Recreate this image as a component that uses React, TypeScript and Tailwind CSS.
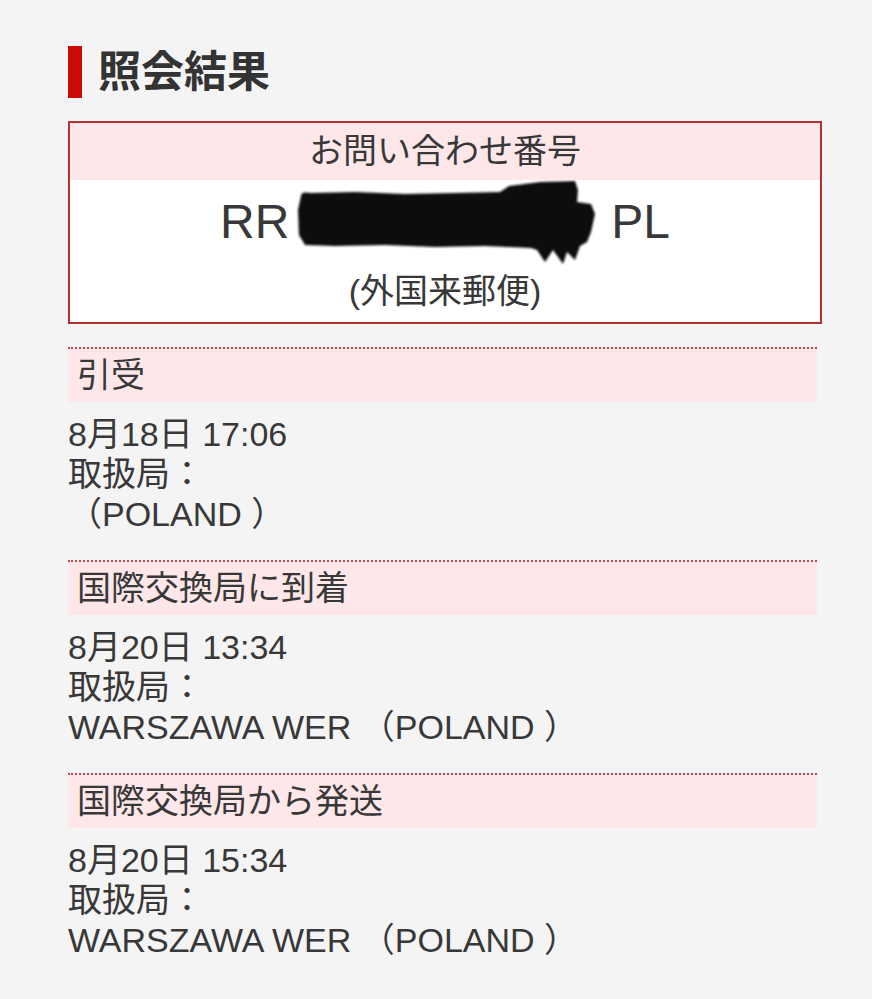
const font = "font-['Liberation_Sans','Noto_Sans_CJK_JP',sans-serif]";

type Event = {
  status: string;
  date: string;
  office: string;
};

const events: Event[] = [
  { status: '引受', date: '8月18日 17:06', office: '（POLAND ）' },
  { status: '国際交換局に到着', date: '8月20日 13:34', office: 'WARSZAWA WER （POLAND ）' },
  { status: '国際交換局から発送', date: '8月20日 15:34', office: 'WARSZAWA WER （POLAND ）' },
];

function Redaction() {
  return (
    <svg width="310" height="85" viewBox="0 0 310 85" className="mx-[6px] shrink-0">
      <defs>
        <filter id="soft" x="-5%" y="-5%" width="110%" height="110%">
          <feGaussianBlur stdDeviation="1.2" />
        </filter>
      </defs>
      <path
        d="M6,16 C6,12 10,12 16,13 L60,12 L110,14 L160,13 L205,12 L214,6 L245,2 L280,1 L283,10 L282,22 L296,24 L300,34 L296,52 L292,62 L285,66 L280,80 L272,72 L268,84 L258,70 L250,82 L242,70 L236,68 L190,66 L140,67 L90,65 L40,66 L10,65 L4,55 L3,30 Z"
        fill="#111"
        filter="url(#soft)"
      />
    </svg>
  );
}

export default function App() {
  return (
    <div className={`min-h-screen bg-[#f4f4f4] text-[#383838] ${font}`}>
      <div className="pl-[68px] pt-[46px]">
        {/* Title */}
        <div className="flex items-center gap-[16px]">
          <div className="h-[52px] w-[14px] bg-[#cc0a0a]" />
          <h1 className="text-[43px] font-bold leading-[52px] text-[#333]">照会結果</h1>
        </div>

        {/* Tracking number box */}
        <div className="mt-[23px] w-[754px] border-2 border-[#b23131] bg-white">
          <div className="flex h-[57px] items-center justify-center bg-[#fde7e8] text-[34px]">
            お問い合わせ番号
          </div>
          <div className="pt-[12px] pb-[11px]">
            <div className="flex h-[60px] items-center justify-center text-[48px] leading-[60px]">
              <span>RR</span>
              <Redaction />
              <span>PL</span>
            </div>
            <div className="mt-[19px] text-center text-[34px] leading-[40px]">(外国来郵便)</div>
          </div>
        </div>

        {/* History */}
        <div className="mt-[23px] w-[749px]">
          {events.map((e) => (
            <div key={e.date + e.status} className="border-t-2 border-dotted border-[#c44848]">
              <div className="flex h-[53px] items-center bg-[#fde7e8] pl-[9px] text-[34px]">
                {e.status}
              </div>
              <div className="pt-[12px] pb-[26px] text-[34px] leading-[40px]">
                <div>{e.date}</div>
                <div>取扱局：</div>
                <div>{e.office}</div>
              </div>
            </div>
          ))}
        </div>
      </div>
    </div>
  );
}
